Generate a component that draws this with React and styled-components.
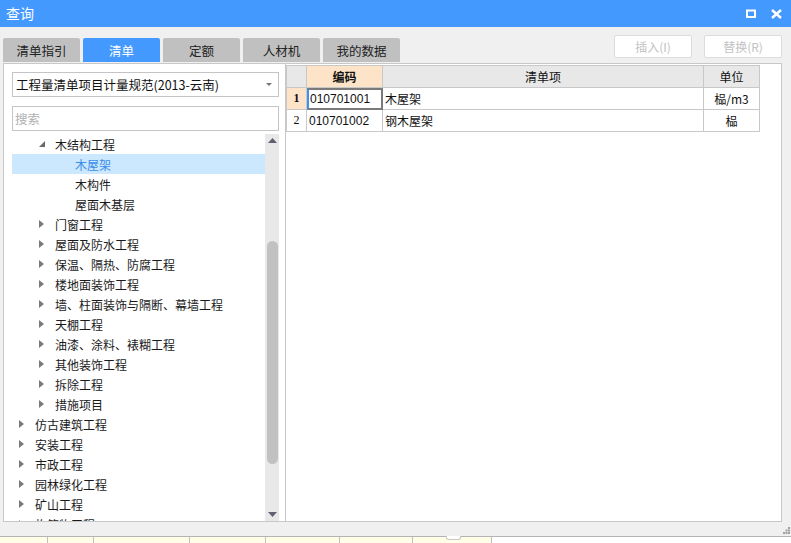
import React from 'react';
import styled, { createGlobalStyle } from 'styled-components';

const GlobalStyle = createGlobalStyle`
    html, body {
        margin: 0;
        padding: 0;
        width: 791px;
        height: 543px;
        overflow: hidden;
        font-family: "Noto Sans CJK SC", "Liberation Sans", sans-serif;
    }
`;

const Window = styled.div`
    width: 791px;
    height: 543px;
    display: flex;
    flex-direction: column;
    background: #f0f0f0;
`;

const TitleBar = styled.div`
    height: 27px;
    background: #4499fe;
    display: flex;
    align-items: center;
    padding: 0 9px 0 6px;
    color: #fff;
    font-size: 14px;
`;

const Title = styled.span`
    flex: 1;
    line-height: 27px;
`;

const TitleButtons = styled.div`
    display: flex;
    align-items: center;
    gap: 15px;
`;

const TopRow = styled.div`
    height: 36px;
    display: flex;
    align-items: flex-end;
    padding: 0 9px 0 3px;
`;

const Tabs = styled.div`
    display: flex;
    gap: 3px;
    flex: 1;
`;

const Tab = styled.div`
    width: 77px;
    height: 24px;
    margin-bottom: 1px;
    border-radius: 2px 2px 0 0;
    background: ${(p) => (p.active ? '#4499fe' : '#c0c0c0')};
    color: ${(p) => (p.active ? '#fff' : '#222')};
    font-size: 12.5px;
    display: flex;
    align-items: center;
    justify-content: center;
`;

const Actions = styled.div`
    display: flex;
    gap: 12px;
    align-self: flex-start;
    margin-top: 8px;
`;

const ActionButton = styled.div`
    width: 76px;
    height: 21px;
    border: 1px solid #dcdcdc;
    border-radius: 2px;
    background: #fff;
    color: #c2c2c2;
    font-size: 12px;
    display: flex;
    align-items: center;
    justify-content: center;
`;

const Panels = styled.div`
    display: flex;
    padding: 0 9px 0 3px;
    height: 459px;
`;

const LeftPanel = styled.div`
    width: 283px;
    box-sizing: border-box;
    background: #fff;
    border: 1px solid #c8c8c8;
    display: flex;
    flex-direction: column;
    padding: 8px 6px 0 8px;
`;

const SelectBox = styled.div`
    height: 25px;
    box-sizing: border-box;
    border: 1px solid #c4c4c4;
    display: flex;
    align-items: center;
    padding: 0 6px 0 3px;
    font-size: 12.5px;
    color: #111;
`;

const SelectText = styled.span`
    flex: 1;
`;

const SearchBox = styled.div`
    height: 25px;
    margin-top: 9px;
    box-sizing: border-box;
    border: 1px solid #c4c4c4;
    display: flex;
    align-items: center;
    padding: 0 2px;
    font-size: 12.5px;
    color: #b0b0b0;
`;

const TreeArea = styled.div`
    flex: 1;
    margin-top: 3px;
    display: flex;
    overflow: hidden;
`;

const TreeList = styled.div`
    flex: 1;
    overflow: hidden;
`;

const TreeRow = styled.div`
    height: 20px;
    display: flex;
    align-items: center;
    padding-left: ${(p) => p.level * 20 + 7}px;
    background: ${(p) => (p.selected ? '#cce8ff' : 'transparent')};
    color: ${(p) => (p.selected ? '#3a8de8' : '#1a1a1a')};
    font-size: 12px;
    white-space: nowrap;
`;

const Toggle = styled.span`
    width: 16px;
    display: flex;
    align-items: center;
`;

const Scrollbar = styled.div`
    width: 14px;
    background: #e8e8e8;
    display: flex;
    flex-direction: column;
    align-items: center;
    justify-content: space-between;
    padding: 4px 0;
    box-sizing: border-box;
`;

const ScrollTrack = styled.div`
    flex: 1;
    width: 100%;
    display: flex;
    flex-direction: column;
    align-items: center;
    padding: 98px 0 48px;
    box-sizing: border-box;
`;

const Thumb = styled.div`
    width: 11px;
    flex: 1;
    border-radius: 6px;
    background: #c1c1c1;
`;

const RightPanel = styled.div`
    width: 496px;
    box-sizing: border-box;
    background: #fff;
    border: 1px solid #c8c8c8;
    border-left: none;
    padding-top: 1px;
`;

const Table = styled.div`
    display: grid;
    grid-template-columns: 21px 76px 321px 56px;
    width: 474px;
    border-top: 1px solid #c8c8c8;
`;

const Cell = styled.div`
    height: 22px;
    box-sizing: border-box;
    border-right: 1px solid #c8c8c8;
    border-bottom: 1px solid #c8c8c8;
    border-left: ${(p) => (p.first ? '1px solid #c8c8c8' : 'none')};
    display: flex;
    align-items: center;
    justify-content: ${(p) => p.align || 'flex-start'};
    padding: 0 2px;
    font-size: 12px;
    color: #111;
    background: ${(p) => p.bg || '#fff'};
    font-weight: ${(p) => (p.bold ? 700 : 400)};
    font-family: ${(p) => (p.num ? '"Liberation Sans", "Noto Sans CJK SC", sans-serif' : 'inherit')};
`;

const RowNum = styled(Cell)`
    font-family: "Liberation Serif", serif;
    justify-content: center;
`;

const ActiveCell = styled(Cell)`
    border: 2px solid #7a7a7a;
    border-left: 2px solid #3d92f0;
    padding-left: 1px;
`;

const Gap = styled.div`
    height: 12px;
    display: flex;
    justify-content: flex-end;
    align-items: flex-end;
    padding: 0 1px 2px 0;
`;

const StatusStrip = styled.div`
    flex: 1;
    border-top: 1px solid #b4b4b4;
    background: #fff;
    display: flex;
`;

const StatusCell = styled.div`
    width: ${(p) => p.w}px;
    box-sizing: border-box;
    background: #fffde6;
    border-right: 1px solid #c0c0c0;
    position: relative;
`;

const StatusTab = styled.div`
    position: absolute;
    top: -1px;
    left: 33px;
    width: 13px;
    height: 3px;
    border: 1px solid #c8c8c8;
    border-top: none;
    border-radius: 0 0 3px 3px;
    background: #fff;
`;

const Arrow = ({ dir }) => (
    <svg width="9" height="5" viewBox="0 0 9 5">
        {dir === 'up' ? (
            <path d="M0 5 L4.5 0 L9 5 Z" fill="#606070" />
        ) : (
            <path d="M0 0 L9 0 L4.5 5 Z" fill="#606070" />
        )}
    </svg>
);

const Collapsed = () => (
    <svg width="5" height="8" viewBox="0 0 5 8">
        <path d="M0 0 L5 4 L0 8 Z" fill="#7a7a7a" />
    </svg>
);

const Expanded = () => (
    <svg width="6" height="6" viewBox="0 0 6 6">
        <path d="M6 0 L6 6 L0 6 Z" fill="#6a6a6a" />
    </svg>
);

const tree = [
    { level: 1, text: '木结构工程', open: true },
    { level: 2, text: '木屋架', selected: true },
    { level: 2, text: '木构件' },
    { level: 2, text: '屋面木基层' },
    { level: 1, text: '门窗工程' },
    { level: 1, text: '屋面及防水工程' },
    { level: 1, text: '保温、隔热、防腐工程' },
    { level: 1, text: '楼地面装饰工程' },
    { level: 1, text: '墙、柱面装饰与隔断、幕墙工程' },
    { level: 1, text: '天棚工程' },
    { level: 1, text: '油漆、涂料、裱糊工程' },
    { level: 1, text: '其他装饰工程' },
    { level: 1, text: '拆除工程' },
    { level: 1, text: '措施项目' },
    { level: 0, text: '仿古建筑工程' },
    { level: 0, text: '安装工程' },
    { level: 0, text: '市政工程' },
    { level: 0, text: '园林绿化工程' },
    { level: 0, text: '矿山工程' },
    { level: 0, text: '构筑物工程' },
];

const tabs = ['清单指引', '清单', '定额', '人材机', '我的数据'];
const statusWidths = [48, 46, 96, 76, 74, 73, 79];

export default function App() {
    return (
        <Window>
            <GlobalStyle />
            <TitleBar>
                <Title>查询</Title>
                <TitleButtons>
                    <svg width="10" height="9" viewBox="0 0 10 9">
                        <rect x="1" y="1.5" width="8" height="6.5" fill="none" stroke="#fff" strokeWidth="2" />
                    </svg>
                    <svg width="11" height="10" viewBox="0 0 11 10">
                        <path d="M1 1 L10 9 M10 1 L1 9" stroke="#fff" strokeWidth="2.4" />
                    </svg>
                </TitleButtons>
            </TitleBar>
            <TopRow>
                <Tabs>
                    {tabs.map((t) => (
                        <Tab key={t} active={t === '清单'}>
                            {t}
                        </Tab>
                    ))}
                </Tabs>
                <Actions>
                    <ActionButton>插入(I)</ActionButton>
                    <ActionButton>替换(R)</ActionButton>
                </Actions>
            </TopRow>
            <Panels>
                <LeftPanel>
                    <SelectBox>
                        <SelectText>工程量清单项目计量规范(2013-云南)</SelectText>
                        <svg width="6" height="3" viewBox="0 0 6 3">
                            <path d="M0 0 L6 0 L3 3 Z" fill="#777" />
                        </svg>
                    </SelectBox>
                    <SearchBox>搜索</SearchBox>
                    <TreeArea>
                        <TreeList>
                            {tree.map((n) => (
                                <TreeRow key={n.text} level={n.level} selected={n.selected}>
                                    <Toggle>
                                        {n.level < 2 && (n.open ? <Expanded /> : <Collapsed />)}
                                    </Toggle>
                                    {n.text}
                                </TreeRow>
                            ))}
                        </TreeList>
                        <Scrollbar>
                            <Arrow dir="up" />
                            <ScrollTrack>
                                <Thumb />
                            </ScrollTrack>
                            <Arrow dir="down" />
                        </Scrollbar>
                    </TreeArea>
                </LeftPanel>
                <RightPanel>
                    <Table>
                        <Cell first bg="#e8e8e8" />
                        <Cell bg="#fde4c9" bold align="center">编码</Cell>
                        <Cell bg="#e8e8e8" align="center">清单项</Cell>
                        <Cell bg="#e8e8e8" align="center">单位</Cell>

                        <RowNum first bg="#fde4c9" bold>1</RowNum>
                        <ActiveCell num>010701001</ActiveCell>
                        <Cell>木屋架</Cell>
                        <Cell align="center">榀/m3</Cell>

                        <RowNum first>2</RowNum>
                        <Cell num>010701002</Cell>
                        <Cell>钢木屋架</Cell>
                        <Cell align="center">榀</Cell>
                    </Table>
                </RightPanel>
            </Panels>
            <Gap>
                <svg width="7" height="7" viewBox="0 0 7 7" fill="#a0a0a0">
                    <rect x="5" y="0" width="2" height="2" />
                    <rect x="2.5" y="2.5" width="2" height="2" />
                    <rect x="5" y="2.5" width="2" height="2" />
                    <rect x="0" y="5" width="2" height="2" />
                    <rect x="2.5" y="5" width="2" height="2" />
                    <rect x="5" y="5" width="2" height="2" />
                </svg>
            </Gap>
            <StatusStrip>
                {statusWidths.map((w, i) => (
                    <StatusCell key={i} w={w}>
                        {i === 6 && <StatusTab />}
                    </StatusCell>
                ))}
            </StatusStrip>
        </Window>
    );
}
